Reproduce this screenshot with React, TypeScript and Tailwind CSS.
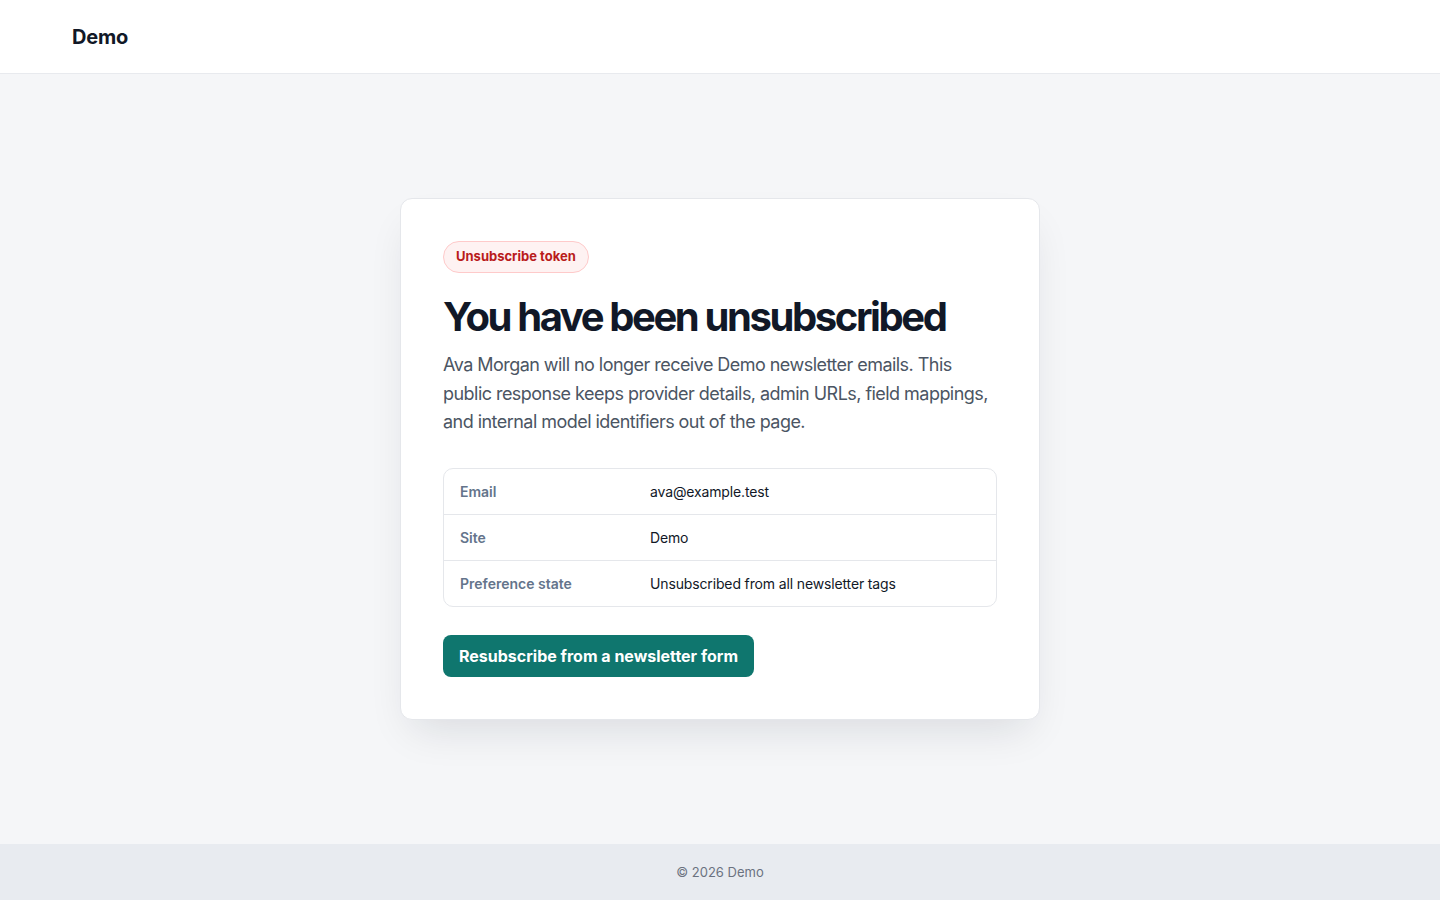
import React from 'react';

const details = [
  { label: 'Email', value: 'ava@example.test' },
  { label: 'Site', value: 'Demo' },
  { label: 'Preference state', value: 'Unsubscribed from all newsletter tags' },
];

export default function App() {
  return (
    <div
      className="flex min-h-screen flex-col bg-[#f5f6f8] text-gray-900"
      style={{ fontFamily: 'Inter, "Noto Sans", sans-serif' }}
    >
      <header className="flex h-[74px] items-center border-b border-[#e8eaee] bg-white px-[72px]">
        <span className="text-[20px] font-bold tracking-[-0.01em] text-[#111827]">Demo</span>
      </header>

      <main className="flex flex-1 items-center justify-center px-4">
        <section className="w-[640px] rounded-xl border border-[#e5e7eb] bg-white p-[42px] shadow-[0_20px_40px_-12px_rgba(15,23,42,0.12)]">
          <span className="inline-flex h-8 items-center rounded-full border border-[#fecaca] bg-[#fef2f2] px-3 text-[13px] font-bold text-[#b91c1c]">
            Unsubscribe token
          </span>

          <h1 className="mt-[22px] text-[40px] font-bold leading-[44px] tracking-[-0.06em] text-[#111827]">
            You have been unsubscribed
          </h1>

          <p className="mt-3 text-[18px] leading-[28.6px] tracking-[-0.03em] text-[#4b5563]">
            Ava Morgan will no longer receive Demo newsletter emails. This public response keeps provider details,
            admin URLs, field mappings, and internal model identifiers out of the page.
          </p>

          <div className="mt-[31px] overflow-hidden rounded-[10px] border border-[#e5e7eb]">
            {details.map((row, index) => (
              <div
                key={row.label}
                className={`grid grid-cols-[190px_1fr] text-[14px] leading-[21px] ${
                  index > 0 ? 'border-t border-[#e5e7eb]' : ''
                }`}
              >
                <div className="px-4 py-3 font-semibold text-[#64748b]">{row.label}</div>
                <div className="px-4 py-3 tracking-[-0.01em] text-[#111827]">{row.value}</div>
              </div>
            ))}
          </div>

          <button
            type="button"
            className="mt-7 inline-flex h-[42px] items-center rounded-lg bg-[#0f766e] px-4 text-[16px] font-bold text-white"
          >
            Resubscribe from a newsletter form
          </button>
        </section>
      </main>

      <footer className="flex h-14 items-center justify-center bg-[#e8ebf0] pt-px text-[13px] text-[#6b7280]">
        © 2026 Demo
      </footer>
    </div>
  );
}
